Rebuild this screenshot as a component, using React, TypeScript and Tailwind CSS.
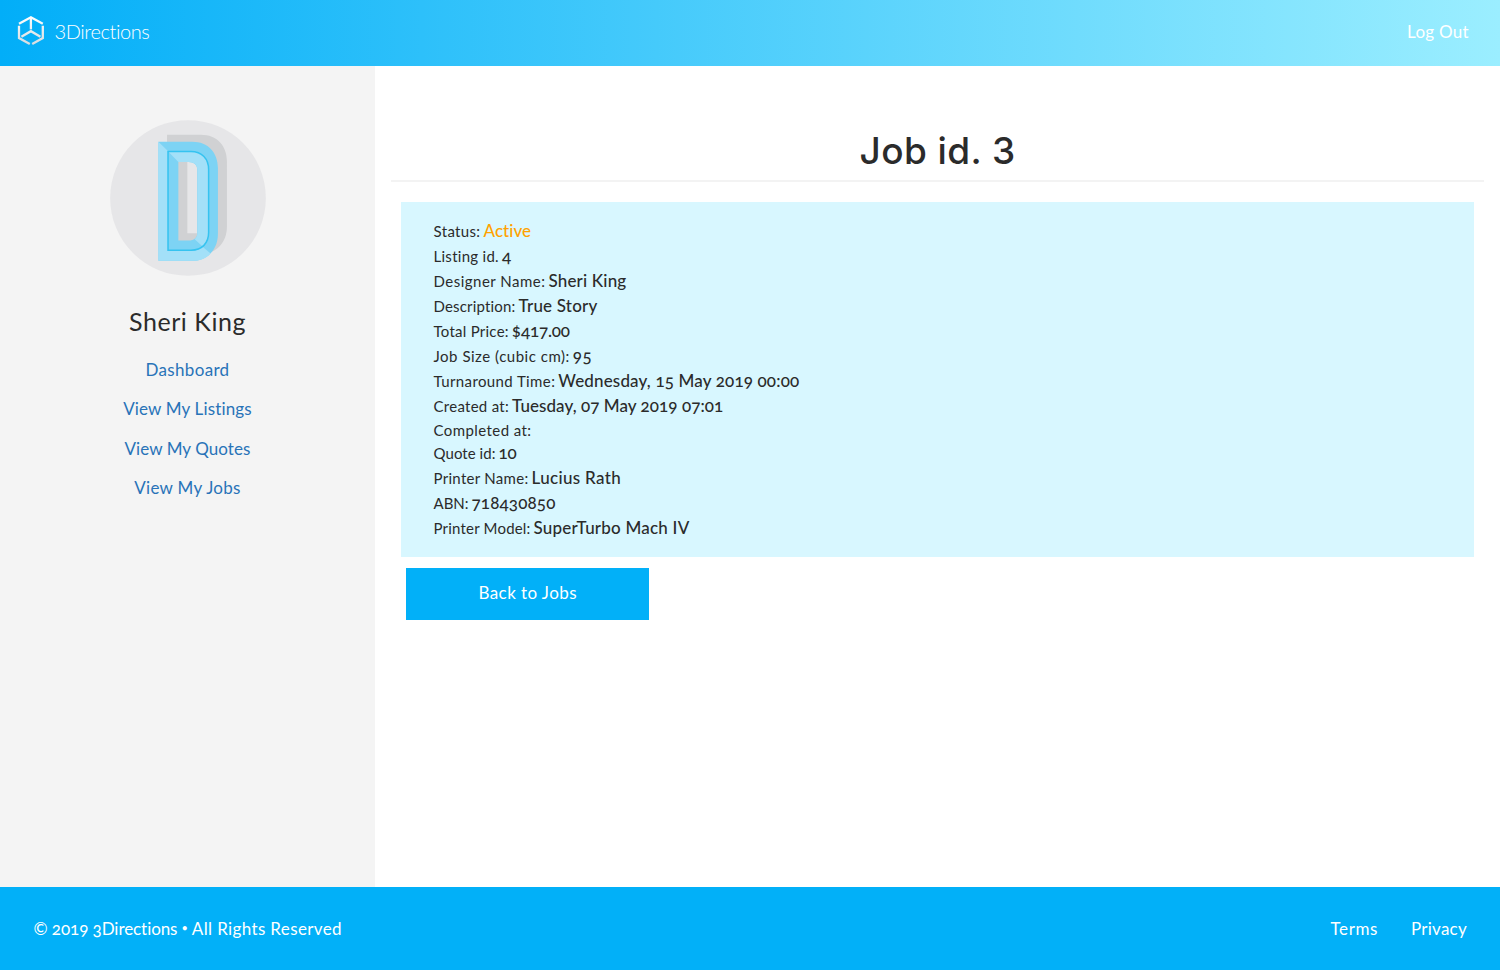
type Detail = { label: string; labelClass: string; value?: string; valueClass?: string; rowClass?: string };

const navLinks = [
  { text: "Dashboard", className: "tracking-[0.33px]" },
  { text: "View My Listings", className: "tracking-[0.16px]" },
  { text: "View My Quotes", className: "tracking-[0.07px]" },
  { text: "View My Jobs", className: "tracking-[0.29px]" },
];

const details: Detail[] = [
  { label: "Status:", labelClass: "tracking-[0.35px]", value: "Active", valueClass: "tracking-[0.05px] text-[#ffa200]" },
  { label: "Listing id.", labelClass: "tracking-[0.28px]", value: "4", valueClass: "tracking-normal" },
  { label: "Designer Name:", labelClass: "tracking-[0.49px]", value: "Sheri King", valueClass: "tracking-[0.18px]" },
  { label: "Description:", labelClass: "tracking-[0.18px]", value: "True Story", valueClass: "tracking-[0.2px]" },
  { label: "Total Price:", labelClass: "tracking-[0.26px]", value: "$417.00", valueClass: "tracking-[-0.16px]" },
  { label: "Job Size (cubic cm):", labelClass: "tracking-[0.52px]", value: "95", valueClass: "tracking-[0.5px]" },
  { label: "Turnaround Time:", labelClass: "tracking-[0.39px]", value: "Wednesday, 15 May 2019 00:00", valueClass: "tracking-[0.16px]" },
  { label: "Created at:", labelClass: "tracking-[0.28px]", value: "Tuesday, 07 May 2019 07:01", valueClass: "tracking-[0.06px]" },
  { label: "Completed at:", labelClass: "tracking-[0.42px]", rowClass: "h-[22px]" },
  { label: "Quote id:", labelClass: "tracking-[0.06px]", value: "10", valueClass: "tracking-[-0.19px]" },
  { label: "Printer Name:", labelClass: "tracking-[0.3px]", value: "Lucius Rath", valueClass: "tracking-[0.33px]" },
  { label: "ABN:", labelClass: "tracking-[-0.02px]", value: "718430850", valueClass: "tracking-[0.15px]" },
  { label: "Printer Model:", labelClass: "tracking-[0.2px]", value: "SuperTurbo Mach IV", valueClass: "tracking-[0.22px]" },
];

function Logo() {
  return (
    <svg viewBox="0 0 28 30" className="h-[30px] w-7" fill="none" stroke="url(#logoFill)" strokeWidth="2.3">
      <defs>
        <linearGradient id="logoFill" gradientUnits="userSpaceOnUse" x1="0" y1="0" x2="0" y2="30">
          <stop offset="0" stopColor="#ffffff" />
          <stop offset="1" stopColor="#d5dade" />
        </linearGradient>
      </defs>
      <path d="M2 7.8 L13.9 1.3 L25.8 7.8" />
      <path d="M2 9.8 V22 L12.8 28" />
      <path d="M25.8 9.8 V22 L15.2 28" />
      <path d="M13.9 2 V13.4" />
      <path d="M4.4 20.8 L13.9 15.2 L23.4 20.8" />
    </svg>
  );
}

function Avatar() {
  return (
    <svg viewBox="28.5 28.5 469 469" className="size-[156px]">
      <circle cx="263" cy="263" r="234" fill="#e6e6e8" />
      <path
        fill="#d0d1d3"
        fillRule="evenodd"
        d="M200 73 H302 C350 73 380 106 380 152 V350 C380 394 350 431 302 431 H200 Z M261 133 V369 H291 V175 C291 163 284 155 272 154 L268 133 Z"
      />
      <path
        fill="#7dd3f4"
        fillRule="evenodd"
        d="M174 94 H276 C324 94 353 127 353 173 V371 C353 415 324 452 276 452 H174 Z M234 155 V391 H265 C281 391 291 382 291 369 V178 C291 164 281 155 265 155 Z"
      />
      <path fill="#a3e0f8" d="M174 94 L202 121 V422 H274 C288 422 298 417 306 409 L331 430 C317 445 299 452 276 452 H174 Z" />
      <path
        fill="#a3e0f8"
        d="M202 122 H272 C305 122 325 145 325 177 V367 C325 384 318 399 307 409 L283 387 C288 383 291 377 291 369 V178 C291 164 281 155 265 155 H234 Z"
      />
      <path fill="none" stroke="#35c3f0" strokeWidth="4.5" d="M203 123 H272 C305 123 325 145 325 177 V367 C325 399 305 420 272 420 H203 Z" />
    </svg>
  );
}

export default function App() {
  return (
    <div className="flex h-[970px] flex-col bg-white font-['Lato','Open_Sans',sans-serif] text-[17px] text-[#2b2b2b] [font-variant-ligatures:none] [font-variant-numeric:oldstyle-nums]">
      <header className="flex h-[66px] shrink-0 items-center justify-between bg-linear-to-r/srgb from-[#02aef8] to-[#9beeff] pr-[31px] pl-[17px] text-white">
        <a className="flex items-center gap-[9.5px] pb-1">
          <Logo />
          <span className="text-[20px] leading-6 font-light tracking-[-0.4px] [font-variant-numeric:lining-nums]">3Directions</span>
        </a>
        <a className="pb-[2px] tracking-[0.29px]">Log Out</a>
      </header>

      <div className="flex min-h-0 flex-1">
        <aside className="flex w-[375px] shrink-0 flex-col items-center bg-[#f4f4f4] pt-[54px]">
          <Avatar />
          <h2 className="mt-[30px] text-[25px] leading-[30px] tracking-[0.55px]">Sheri King</h2>
          <nav className="mt-[13.6px] flex flex-col items-center text-[#2873b8]">
            {navLinks.map((link) => (
              <a key={link.text} className={`flex h-[39.6px] items-center ${link.className}`}>
                {link.text}
              </a>
            ))}
          </nav>
        </aside>

        <main className="flex-1 px-4">
          <h1 className="border-b-2 border-[#f3f3f3] pt-[62px] pb-[7px] text-center font-['Inter',sans-serif] text-[37px] leading-[45px] font-medium tracking-[0.4px]">
            Job id. 3
          </h1>
          <section className="mx-[10px] mt-[20.4px] h-[355px] bg-[#d8f7ff] pt-4 pl-[32.5px]">
            {details.map((d) => (
              <div key={d.label} className={`flex items-baseline gap-[3px] leading-[25px] ${d.rowClass ?? "h-[25px]"}`}>
                <span className={`text-[15px] ${d.labelClass}`}>{d.label}</span>
                {d.value && <span className={`font-medium ${d.valueClass}`}>{d.value}</span>}
              </div>
            ))}
          </section>
          <button className="mt-[10.6px] ml-[15.4px] flex h-[51.6px] w-[242.6px] items-center justify-center bg-[#02b0f8] pb-[2px] tracking-[0.43px] text-white">
            Back to Jobs
          </button>
        </main>
      </div>

      <footer className="flex h-[83px] shrink-0 items-center justify-between bg-[#02b0f8] pr-[33px] pl-[33.5px] text-white">
        <p className="flex items-center gap-1">
          <span className="tracking-[-0.07px]">© 2019 3Directions</span>
          <span className="text-[11px]">•</span>
          <span className="tracking-[0.37px]">All Rights Reserved</span>
        </p>
        <div className="flex gap-[33px]">
          <a className="tracking-[0.6px]">Terms</a>
          <a className="tracking-[0.25px]">Privacy</a>
        </div>
      </footer>
    </div>
  );
}
